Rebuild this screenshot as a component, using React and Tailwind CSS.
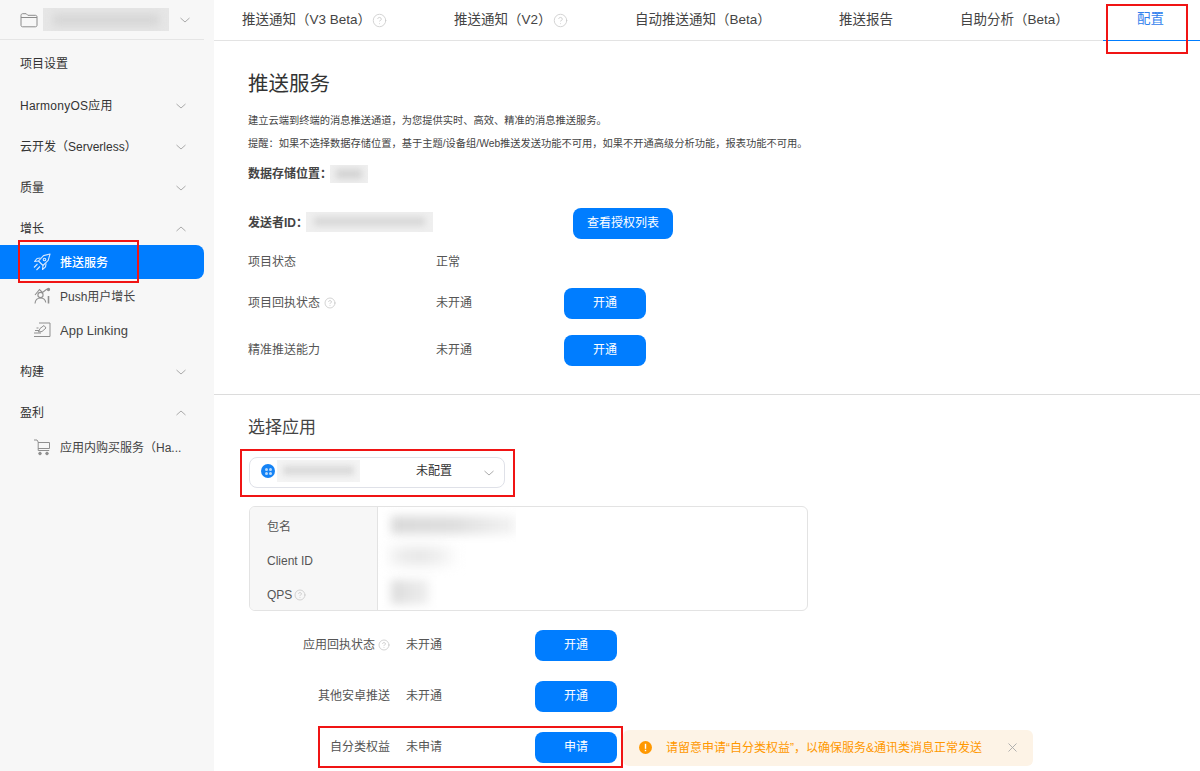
import { CircleHelp } from "lucide-react"

const Chevron = ({ up, className = "" }) => (
    <svg className={`h-[10px] w-[10px] text-[#a0a0a0] ${className}`} viewBox="0 0 10 10" fill="none" stroke="currentColor" strokeWidth="0.9">
        <path d={up ? "M0.5 7 5 3l4.5 4" : "M0.5 3 5 7l4.5-4"} />
    </svg>
)

const Help = () => <CircleHelp className="h-[12px] w-[12px] text-[#c4c4c4]" strokeWidth={1.5} />

const RocketIcon = () => (
    <svg className="h-[18px] w-[18px] text-[#d5e8ff]" viewBox="0 0 18 18" fill="none" stroke="currentColor" strokeWidth="1.1" strokeLinejoin="round">
        <path d="M17 1 10.5 2.6 5.5 8l4.5 4.5 5.2-5.2z" />
        <path d="M5.5 8 1.5 8.5 4 5.5l3.5-.5M10 12.5l-.5 4 3-2.6.6-3.6" />
        <circle cx="11.5" cy="6.5" r="1.3" />
        <path d="M1 14.5 4.5 11M3.5 17 7 13.5" />
    </svg>
)

const GrowthIcon = () => (
    <svg className="h-[18px] w-[18px] text-[#8f8f8f]" viewBox="0 0 18 18" fill="none" stroke="currentColor" strokeWidth="1.1">
        <circle cx="7.5" cy="8" r="2.6" />
        <path d="M2 16.5c.3-3.6 2.4-5.5 5.5-5.5s4.8 1.6 5.3 4.5" />
        <path d="M2 8 6.5 2.5l3 3L14 2" />
        <circle cx="15.5" cy="2.5" r="1.1" fill="currentColor" />
        <path d="M15.5 9v7.5" strokeWidth="1.6" />
    </svg>
)

const LinkingIcon = () => (
    <svg className="h-[18px] w-[18px] text-[#8f8f8f]" viewBox="0 0 18 18" fill="none" stroke="currentColor" strokeWidth="1">
        <path d="M6 2h11v13.5H1" />
        <path d="M7 7.5 11 4.5l2 2.5-4 3.5-3.5.5z" />
        <path d="M2 9.5h4M1 12h7M3.5 7h2" />
    </svg>
)

const CartIcon = () => (
    <svg className="h-[18px] w-[18px] text-[#8f8f8f]" viewBox="0 0 18 18" fill="none" stroke="currentColor" strokeWidth="1">
        <path d="M1 2h3l1.2 2v8.5h11" />
        <path d="M5 4.5h11.5v6H5" />
        <circle cx="7" cy="15.5" r="1.3" fill="currentColor" />
        <circle cx="14" cy="15.5" r="1.3" fill="currentColor" />
    </svg>
)

const SideItem = ({ label, chevron, up, labelClass = "" }) => (
    <div className="flex h-[41px] items-center justify-between pl-[20px] pr-[28px] text-[12px] text-[#333]">
        <span className={`pt-[1px] ${labelClass}`}>{label}</span>
        {chevron && <Chevron up={up} />}
    </div>
)

const SubItem = ({ icon, label, active, labelClass = "" }) => (
    <div className={`flex h-[34px] w-[204px] items-center pl-[33px] text-[12px] ${active ? "rounded-r-[8px] bg-[#007dff] font-medium text-white" : "text-[#444]"}`}>
        <span className="flex w-[27px] shrink-0 items-center">{icon}</span>
        <span className={`truncate pr-[16px] pt-[1px] ${labelClass}`}>{label}</span>
    </div>
)

const Sidebar = () => (
    <aside className="h-full w-[214px] shrink-0 bg-[#f7f7f7]">
        <div className="flex h-[40px] w-[204px] items-center border-b border-[#e5e5e5] pl-[20px] pr-[14px]">
            <svg className="h-[16px] w-[18px] shrink-0 text-[#8c8c8c]" viewBox="0 0 18 16" fill="none" stroke="currentColor" strokeWidth="1">
                <path d="M1 3.5c0-1 .6-1.8 1.6-1.8h3.6l1.6 1.6h7.6c1 0 1.6.7 1.6 1.6v8.3c0 1-.6 1.6-1.6 1.6H2.6c-1 0-1.6-.6-1.6-1.6z" />
                <path d="M1 5.5h16" />
            </svg>
            <div className="ml-[5px] h-[23px] w-[126px] overflow-hidden bg-[#e6e6e6]">
                <div className="mx-[10px] mt-[6px] h-[12px] bg-[#d6d6d6] blur-[4px]" />
            </div>
            <Chevron className="ml-auto" />
        </div>
        <nav className="mt-[3px]">
            <SideItem label="项目设置" />
            <div className="mt-[1px]">
                <SideItem label="HarmonyOS应用" chevron labelClass="tracking-[0.25px]" />
                <SideItem label="云开发（Serverless）" chevron />
                <SideItem label="质量" chevron />
                <SideItem label="增长" chevron up />
            </div>
            <div className="-mt-[4px]">
                <SubItem active label="推送服务" icon={<RocketIcon />} />
                <SubItem label="Push用户增长" icon={<GrowthIcon />} />
                <SubItem label="App Linking" icon={<LinkingIcon />} labelClass="text-[13px]" />
            </div>
            <div className="mt-[4px]">
                <SideItem label="构建" chevron />
                <SideItem label="盈利" chevron up />
            </div>
            <div className="-mt-[3px]">
                <SubItem label="应用内购买服务（Ha..." icon={<CartIcon />} />
            </div>
        </nav>
    </aside>
)

const tabs = [
    { label: "推送通知（V3 Beta）", help: true, width: "w-[212px]" },
    { label: "推送通知（V2）", help: true, width: "w-[181px]" },
    { label: "自动推送通知（Beta）", width: "w-[204px]" },
    { label: "推送报告", width: "w-[121px]" },
    { label: "自助分析（Beta）", width: "w-[143px]" },
]

const TabBar = () => (
    <div className="flex h-[41px] border-b border-[#e3e3e3] pl-[28px] text-[13.5px] text-[#444]">
        {tabs.map((tab) => (
            <div key={tab.label} className={`flex h-[40px] shrink-0 items-center gap-[1px] pt-[1px] ${tab.width}`}>
                <span>{tab.label}</span>
                {tab.help && <CircleHelp className="h-[15px] w-[15px] text-[#c8c8c8]" strokeWidth={1.25} />}
            </div>
        ))}
        <div className="flex h-[41px] flex-1 items-center border-b border-[#007dff] pb-[2px] pl-[34px] text-[#2f80ed]">配置</div>
    </div>
)

const Btn = ({ children, className = "w-[82px]" }) => (
    <button className={`h-[31px] shrink-0 rounded-[8px] bg-[#007dff] pb-[2px] text-[12px] font-normal text-white ${className}`}>{children}</button>
)

const StatusRow = ({ label, help, value, className }) => (
    <div className={`flex h-[31px] items-center text-[12px] text-[#555] ${className}`}>
        <div className="flex w-[188px] items-center gap-[4px] pb-[2px]">
            <span>{label}</span>
            {help && <Help />}
        </div>
        <span className="w-[128px] pb-[2px]">{value}</span>
        <Btn>开通</Btn>
    </div>
)

const AppRow = ({ label, help, value, action, className, children }) => (
    <div className={`flex h-[31px] items-center text-[12px] text-[#555] ${className}`}>
        <div className="flex w-[142px] items-center justify-end gap-[3px] pb-[2px]">
            <span>{label}</span>
            {help && <Help />}
        </div>
        <span className="ml-[16px] w-[129px] pb-[2px]">{value}</span>
        <Btn>{action}</Btn>
        {children}
    </div>
)

const Content = () => (
    <main className="relative h-full min-w-0 flex-1 overflow-hidden bg-white">
        <TabBar />

        <section className="border-b border-[#dcdcdc] pb-[28px] pl-[34px]">
            <h1 className="pt-[31px] text-[20.5px] leading-[24px] text-[#333]">推送服务</h1>
            <div className="mt-[13px] text-[10.25px] leading-[23px] text-[#444]">
                <p>建立云端到终端的消息推送通道，为您提供实时、高效、精准的消息推送服务。</p>
                <p>提醒：如果不选择数据存储位置，基于主题/设备组/Web推送发送功能不可用，如果不开通高级分析功能，报表功能不可用。</p>
            </div>
            <div className="mt-[7px] flex h-[24px] items-center text-[12px] font-bold text-[#444]">
                <span>数据存储位置：</span>
                <div className="-ml-[2px] h-[18px] w-[38px] overflow-hidden bg-[#efefef]">
                    <div className="mx-[6px] mt-[4px] h-[10px] bg-[#d4d4d4] blur-[3px]" />
                </div>
            </div>
            <div className="mt-[22px] flex h-[31px] items-center text-[12px] font-bold text-[#444]">
                <span className="w-[58px] whitespace-nowrap pb-[2px]">发送者ID：</span>
                <div className="mb-[3px] h-[20px] w-[127px] overflow-hidden bg-[#efefef]">
                    <div className="mx-[8px] mt-[5px] h-[9px] bg-[#d8d8d8] blur-[3px]" />
                </div>
                <Btn className="ml-[140px] w-[100px]">查看授权列表</Btn>
            </div>
            <div className="mt-[11px] flex h-[24px] items-center text-[12px] text-[#555]">
                <span className="w-[188px]">项目状态</span>
                <span>正常</span>
            </div>
            <StatusRow className="mt-[14px]" label="项目回执状态" help value="未开通" />
            <StatusRow className="mt-[16px]" label="精准推送能力" value="未开通" />
        </section>

        <section className="pl-[34px]">
            <h2 className="pt-[21px] text-[17px] leading-[24px] text-[#444]">选择应用</h2>
            <div className="ml-px mt-[17px] flex h-[31px] w-[256px] items-center rounded-[8px] border border-[#dfe1e8] pl-[11px] pr-[10px] text-[12px] text-[#333]">
                <span className="mb-[3px] flex h-[14px] w-[14px] shrink-0 items-center justify-center rounded-full bg-[#1583f5]">
                    <span className="grid grid-cols-2 gap-[1px]">
                        <i className="h-[3px] w-[3px] rounded-full bg-white/70" />
                        <i className="h-[3px] w-[3px] rounded-full bg-white/70" />
                        <i className="h-[3px] w-[3px] rounded-full bg-white/70" />
                        <i className="h-[3px] w-[3px] rounded-full bg-white/70" />
                    </span>
                </span>
                <div className="mb-[3px] ml-[2px] h-[22px] w-[83px] overflow-hidden bg-[#f4f4f4]">
                    <div className="mx-[6px] mt-[6px] h-[9px] bg-[#d9d9d9] blur-[3px]" />
                </div>
                <span className="mb-[3px] ml-[56px]">未配置</span>
                <Chevron className="ml-auto" />
            </div>

            <div className="ml-px mt-[18px] flex h-[105px] w-[559px] overflow-hidden rounded-[6px] border border-[#e3e3e3] text-[12px] text-[#555]">
                <div className="flex w-[128px] shrink-0 flex-col gap-[18px] border-r border-[#e3e3e3] bg-[#f7f7f7] pl-[17px] pt-[12px]">
                    <span className="leading-[16px]">包名</span>
                    <span className="leading-[16px]">Client ID</span>
                    <span className="flex items-center gap-[2px] leading-[16px]">QPS <Help /></span>
                </div>
                <div className="flex flex-col overflow-hidden pl-[13px] pt-[9px]">
                    <div className="h-[18px] w-[125px] bg-gradient-to-r from-[#dadada] via-[#dedede] to-[#f4f4f4] blur-[5px]" />
                    <div className="mt-[14px] h-[16px] w-[62px] bg-gradient-to-r from-[#ececec] via-[#e2e2e2] to-[#f6f6f6] blur-[7px]" />
                    <div className="mt-[16px] h-[24px] w-[38px] bg-gradient-to-r from-[#dcdcdc] to-[#efefef] blur-[5px]" />
                </div>
            </div>

            <AppRow className="mt-[19px]" label="应用回执状态" help value="未开通" action="开通" />
            <AppRow className="mt-[20px]" label="其他安卓推送" value="未开通" action="开通" />
            <AppRow className="mt-[20px]" label="自分类权益" value="未申请" action="申请">
                <div className="ml-[6px] flex h-[36px] w-[410px] shrink-0 items-center rounded-[6px] bg-[#fdf3e6] px-[16px] text-[#ff9800]">
                    <svg className="h-[13px] w-[13px] shrink-0" viewBox="0 0 13 13">
                        <circle cx="6.5" cy="6.5" r="6.5" fill="#ff9800" />
                        <rect x="5.8" y="2.8" width="1.4" height="5" fill="#fff" />
                        <rect x="5.8" y="8.8" width="1.4" height="1.4" fill="#fff" />
                    </svg>
                    <span className="ml-[14px]">请留意申请“自分类权益”，以确保服务&通讯类消息正常发送</span>
                    <svg className="ml-auto h-[9px] w-[9px] shrink-0 text-[#a8a8a8]" viewBox="0 0 9 9" fill="none" stroke="currentColor" strokeWidth="0.9">
                        <path d="m.5.5 8 8M8.5.5l-8 8" />
                    </svg>
                </div>
            </AppRow>
        </section>
    </main>
)

// red review marks drawn over the page
const Mark = ({ className }) => <div className={`pointer-events-none absolute border-2 border-[#f01414] ${className}`} />

export default function App() {
    return (
        <div className="relative flex h-[771px] w-[1200px] overflow-hidden bg-white font-['Liberation_Sans','Noto_Sans_CJK_SC',sans-serif]">
            <Sidebar />
            <Content />
            <Mark className="left-[18px] top-[240px] h-[43px] w-[121px]" />
            <Mark className="left-[1106px] top-[4px] h-[50px] w-[82px]" />
            <Mark className="left-[240px] top-[449px] h-[48px] w-[275px]" />
            <Mark className="left-[318px] top-[726px] h-[42px] w-[305px]" />
        </div>
    )
}
